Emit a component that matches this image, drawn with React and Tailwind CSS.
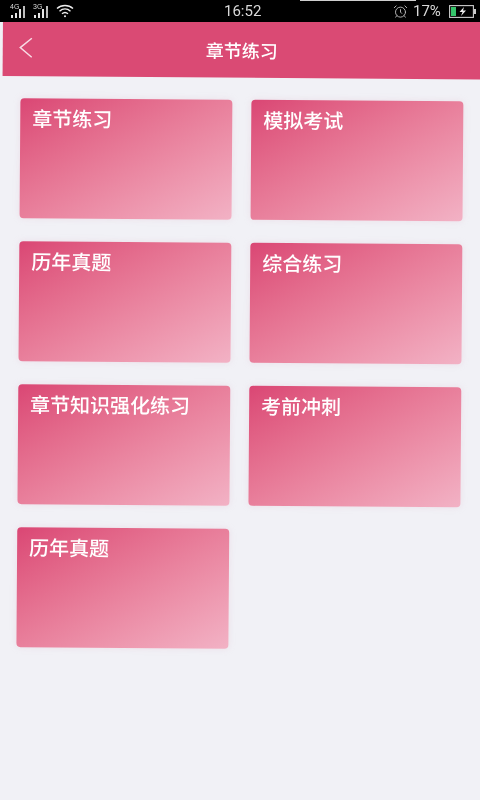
import React from 'react';
import { AlarmClock } from 'lucide-react';

const cards = ['章节练习', '模拟考试', '历年真题', '综合练习', '章节知识强化练习', '考前冲刺', '历年真题'];

const Signal = ({ label }) => (
  <div className="relative w-[17px] h-[14px]">
    <span className="absolute left-0 top-[-1px] text-[7px] leading-[8px] text-[#ddd] font-['Liberation_Sans',sans-serif]">{label}</span>
    <svg width="17" height="14" viewBox="0 0 17 14" fill="#e5e5e5">
      <rect x="1" y="11" width="2" height="3" />
      <rect x="5" y="9" width="2" height="5" />
      <rect x="9" y="5" width="2" height="9" />
      <rect x="13" y="2" width="2" height="12" fill="#bbb" />
    </svg>
  </div>
);

const Wifi = () => (
  <svg width="18" height="14" viewBox="0 0 18 14" fill="none" stroke="#eee" strokeWidth="1.4">
    <path d="M1 4.5C5.5 .5 12.5 .5 17 4.5" />
    <path d="M3.5 7.2C6.8 4.3 11.2 4.3 14.5 7.2" />
    <path d="M6 9.8C7.8 8.2 10.2 8.2 12 9.8" />
    <circle cx="9" cy="12.3" r="1" fill="#eee" stroke="none" />
  </svg>
);

const Battery = () => (
  <svg width="27" height="13" viewBox="0 0 27 13">
    <rect x="0.6" y="0.6" width="23.8" height="11.8" fill="none" stroke="#ccc" strokeWidth="1.1" />
    <rect x="2" y="2" width="5" height="9" fill="#35c46a" />
    <path d="M15 2 10.5 7H13.5L12 11 17 5.6H14Z" fill="#eee" />
    <rect x="25" y="4" width="2" height="5" fill="#ccc" />
  </svg>
);

export default function App() {
  return (
    <div className="w-[480px] h-[800px] overflow-hidden bg-[#f1f1f6] font-['Noto_Sans_CJK_SC',sans-serif] blur-[0.4px]">
      <div className="h-[22px] bg-black relative z-10 text-[#d9d9d9] font-['Roboto',sans-serif]">
        {/* thin light sliver along the top edge */}
        <div className="absolute left-[300px] top-0 w-[116px] h-px bg-[#cfcfcf]" />
        <div className="h-full flex items-center pl-[10px]">
          <div className="flex items-center gap-[6px] w-[214px]">
            <Signal label="4G" />
            <Signal label="3G" />
            <Wifi />
          </div>
          <span className="text-[15px] w-[169px]">16:52</span>
          <AlarmClock size={15} strokeWidth={1.5} className="text-[#bbb] mr-[5px]" />
          <span className="text-[15px] mr-[8px]">17%</span>
          <Battery />
        </div>
      </div>

      <div className="ml-[3px] mt-[-4px] w-[490px] origin-top-left rotate-[0.42deg]">
        <header className="h-[58px] pt-[4px] bg-[#da4a74] flex items-center text-white">
          <svg width="14" height="21" viewBox="0 0 14 21" fill="none" stroke="#f8dbe4" strokeWidth="1.5" className="ml-[16px] mb-[4px]">
            <path d="M13 1 1.5 10.5 13 20" />
          </svg>
          <h1 className="ml-[173px] text-[18px] font-medium mb-[2px]">章节练习</h1>
        </header>
        <div className="grid grid-cols-[212px_212px] gap-x-[19px] gap-y-[23px] pl-[18px] pt-[22px]">
          {cards.map((title, i) => (
            <div
              key={i}
              className="h-[120px] rounded-[4px] bg-gradient-to-br from-[#da4674] to-[#f2b2c5] pl-[12px] pt-[5px] text-white text-[20px] leading-[30px] font-medium shadow-[0_0_6px_rgba(225,190,205,0.35)]"
            >
              {title}
            </div>
          ))}
        </div>
      </div>
    </div>
  );
}
